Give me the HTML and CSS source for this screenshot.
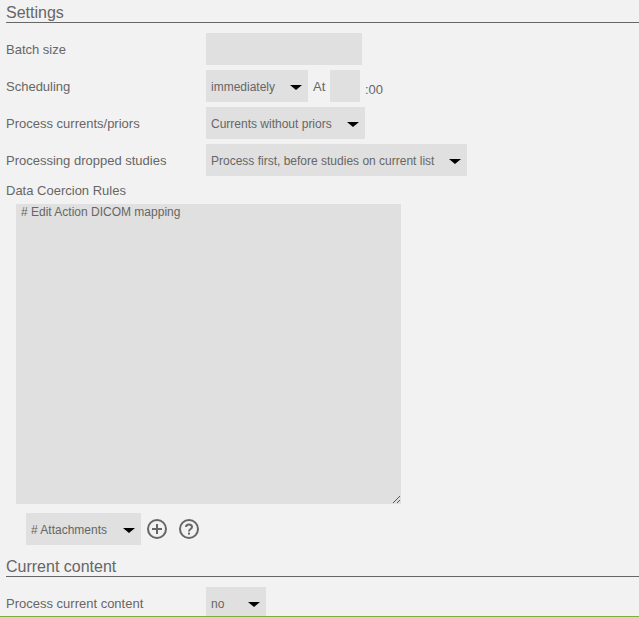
FILE: index.html
```html
<!DOCTYPE html>
<html lang="en">
<head>
    <meta charset="UTF-8">
    <meta name="viewport" content="width=device-width, initial-scale=1.0">
    <title>Settings</title>
    <link rel="stylesheet" href="styles.css">
</head>
<body>
    <div class="page">
        <h2 class="section-title">Settings</h2>

        <div class="form-row first-row">
            <label class="row-label">Batch size</label>
            <div class="field batch-field"></div>
        </div>

        <div class="form-row">
            <label class="row-label">Scheduling</label>
            <div class="field select-field schedule-select">
                <span>immediately</span>
                <i class="arrow"></i>
            </div>
            <span class="at-label">At</span>
            <div class="field hour-field"></div>
            <span class="minutes">:00</span>
        </div>

        <div class="form-row">
            <label class="row-label">Process currents/priors</label>
            <div class="field select-field priors-select">
                <span>Currents without priors</span>
                <i class="arrow"></i>
            </div>
        </div>

        <div class="form-row">
            <label class="row-label">Processing dropped studies</label>
            <div class="field select-field dropped-select">
                <span>Process first, before studies on current list</span>
                <i class="arrow"></i>
            </div>
        </div>

        <div class="rules-label">Data Coercion Rules</div>
        <div class="rules-box">
            <span># Edit Action DICOM mapping</span>
            <svg class="resize-grip" width="9" height="9" viewBox="0 0 9 9">
                <path d="M1 8 L8 1 M5 8 L8 5" stroke="#555" stroke-width="1" fill="none"/>
            </svg>
        </div>

        <div class="attachments-row">
            <div class="field select-field attachments-select">
                <span># Attachments</span>
                <i class="arrow"></i>
            </div>
            <svg class="icon" width="20" height="20" viewBox="0 0 20 20">
                <circle cx="10" cy="10" r="9" stroke="#666" stroke-width="2" fill="none"/>
                <path d="M10 5 V15 M5 10 H15" stroke="#666" stroke-width="2" fill="none"/>
            </svg>
            <svg class="icon" width="20" height="20" viewBox="0 0 20 20">
                <circle cx="10" cy="10" r="9" stroke="#666" stroke-width="2" fill="none"/>
                <path d="M7 8 C7 4.6 13 4.6 13 8 C13 10 10 10 10 12.4" stroke="#666" stroke-width="2" fill="none"/>
                <rect x="9" y="13.6" width="2" height="2" fill="#666"/>
            </svg>
        </div>

        <h2 class="section-title">Current content</h2>

        <div class="form-row first-row">
            <label class="row-label">Process current content</label>
            <div class="field select-field content-select">
                <span>no</span>
                <i class="arrow"></i>
            </div>
        </div>
    </div>
    <div class="footer-line"></div>
</body>
</html>
```

FILE: styles.css
```css
html, body {
    height: 100%;
}

body {
    margin: 0;
    background-color: #f2f2f2;
    color: #666;
    font-family: "Liberation Sans", Arial, sans-serif;
    font-size: 13px;
    overflow: hidden;
    position: relative;
}

.page {
    padding: 3px 0 0 6px;
}

.section-title {
    margin: 0;
    height: 19px;
    line-height: 19px;
    font-size: 16px;
    font-weight: normal;
    border-bottom: 1px solid #666;
}

.form-row {
    display: flex;
    align-items: flex-start;
    height: 32px;
    margin-top: 5px;
}

.first-row {
    margin-top: 10px;
}

.row-label {
    width: 200px;
    flex: none;
    line-height: 34px;
}

.field {
    background-color: #e0e0e0;
    height: 32px;
    flex: none;
}

.select-field {
    display: flex;
    align-items: center;
    justify-content: space-between;
    box-sizing: border-box;
    padding: 2px 6px 0 5px;
    font-size: 12px;
}

.arrow {
    width: 0;
    height: 0;
    border-left: 6px solid transparent;
    border-right: 6px solid transparent;
    border-top: 5px solid #000;
    margin-top: 1px;
}

.batch-field { width: 156px; }
.schedule-select { width: 102px; }
.priors-select { width: 159px; }
.dropped-select { width: 261px; }
.content-select { width: 60px; }

.at-label {
    margin-left: 5px;
    width: 17px;
    line-height: 34px;
}

.hour-field {
    width: 30px;
}

.minutes {
    margin-left: 5px;
    line-height: 40px;
}

.rules-label {
    margin-top: 7px;
    line-height: 16px;
}

.rules-box {
    position: relative;
    box-sizing: border-box;
    width: 385px;
    height: 300px;
    margin: 5px 0 0 10px;
    padding: 1px 5px 0;
    background-color: #e0e0e0;
    font-size: 12px;
    line-height: 15px;
}

.resize-grip {
    position: absolute;
    right: 0;
    bottom: 0;
}

.attachments-row {
    display: flex;
    align-items: center;
    height: 32px;
    margin: 9px 0 12px 20px;
}

.attachments-select {
    width: 115px;
}

.icon {
    margin-left: 6px;
}

.icon + .icon {
    margin-left: 12px;
}

.footer-line {
    position: absolute;
    left: 0;
    right: 0;
    bottom: 0;
    height: 1px;
    background-color: #7ab13c;
}
```
